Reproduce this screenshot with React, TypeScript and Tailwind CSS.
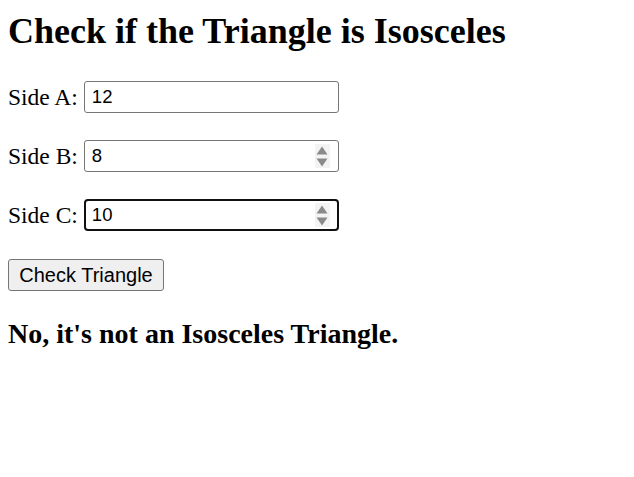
import React from "react";

function Spinner() {
  return (
    <span className="pointer-events-none absolute right-[9px] top-1/2 flex h-[24px] w-[15px] -translate-y-1/2 flex-col items-center justify-center gap-[3px] bg-[#f3f3f3]">
      <svg width="12" height="9" viewBox="0 0 12 9">
        <path d="M6 0.5 L11.5 8.5 L0.5 8.5 Z" fill="#8a8a8a" />
      </svg>
      <svg width="12" height="9" viewBox="0 0 12 9">
        <path d="M0.5 0.5 L11.5 0.5 L6 8.5 Z" fill="#8a8a8a" />
      </svg>
    </span>
  );
}

function Row({
  label,
  value,
  spinner,
  focused,
  first,
}: {
  label: string;
  value: string;
  spinner?: boolean;
  focused?: boolean;
  first?: boolean;
}) {
  return (
    <div className={`flex items-center ${first ? "mt-[32px]" : "mt-[27px]"}`}>
      <label className="text-[23.5px] leading-[26px] text-black">{label}</label>
      <span className="ml-[6px] relative inline-block">
        <input
          readOnly
          value={value}
          className={`block h-[32px] w-[255px] bg-white font-['Liberation_Sans',Arial,sans-serif] text-[18.5px] text-black outline-none ${
            focused
              ? "rounded-[4px] border-2 border-[#101010] pl-[6px]"
              : "rounded-[3px] border border-[#767676] pl-[7px]"
          }`}
        />
        {spinner && <Spinner />}
      </span>
    </div>
  );
}

export default function App() {
  return (
    <div className="min-h-[477px] bg-white px-[8px] font-['Liberation_Serif','Times_New_Roman',serif] text-black">
      <h1 className="pt-[13px] text-[36px] font-bold leading-[36px]">
        Check if the Triangle is Isosceles
      </h1>
      <Row label="Side A:" value="12" first />
      <Row label="Side B:" value="8" spinner />
      <Row label="Side C:" value="10" spinner focused />
      <div className="mt-[28px]">
        <button className="h-[32px] w-[156px] rounded-[3px] border border-[#767676] bg-[#efefef] font-['Liberation_Sans',Arial,sans-serif] text-[20px] leading-none text-black">
          Check Triangle
        </button>
      </div>
      <h3 className="mt-[29px] text-[28px] font-bold leading-[28px]">
        No, it's not an Isosceles Triangle.
      </h3>
    </div>
  );
}
